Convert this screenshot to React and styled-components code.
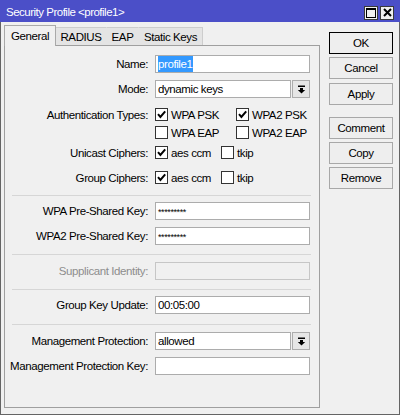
import styled, { createGlobalStyle } from "styled-components";

const GlobalStyle = createGlobalStyle`
  html, body {
    margin: 0;
    padding: 0;
    background: #f0f0f0;
  }
  body {
    font-family: "Liberation Sans", Arial, sans-serif;
    font-size: 11.5px;
    letter-spacing: -0.4px;
    color: #000;
  }
  * {
    box-sizing: border-box;
  }
`;

const tabs = [
  { label: "General", width: 52, active: true },
  { label: "RADIUS", width: 51 },
  { label: "EAP", width: 33 },
  { label: "Static Keys", width: 65 },
];

const buttons = [
  { label: "OK", mt: 0, primary: true },
  { label: "Cancel", mt: 3 },
  { label: "Apply", mt: 4 },
  { label: "Comment", mt: 12 },
  { label: "Copy", mt: 3 },
  { label: "Remove", mt: 3 },
];

const CheckMark = () => (
  <svg width="9" height="9" viewBox="0 0 9 9">
    <path d="M1 4.2 L3.4 6.9 L8.2 1.3" fill="none" stroke="#000" strokeWidth="2" />
  </svg>
);

const DropArrow = () => (
  <svg width="9" height="9" viewBox="0 0 9 9">
    <rect x="1" y="0.5" width="7" height="1.5" fill="#000" />
    <rect x="3" y="3" width="3" height="2" fill="#000" />
    <path d="M0.8 5 L8.2 5 L4.5 8.6 Z" fill="#000" />
  </svg>
);

const Check = ({ label, checked, width }) => (
  <CheckItem $w={width}>
    <CheckBox>{checked && <CheckMark />}</CheckBox>
    <span>{label}</span>
  </CheckItem>
);

const SecurityProfile = () => {
  return (
    <Window>
      <TitleBar>
        <Title>Security Profile &lt;profile1&gt;</Title>
        <TitleButtons>
          <TitleButton>
            <svg width="10" height="10" viewBox="0 0 10 10">
              <rect x="0.5" y="0.5" width="9" height="9" fill="none" stroke="#000" />
              <rect x="0" y="0" width="10" height="2" fill="#000" />
            </svg>
          </TitleButton>
          <TitleButton>
            <svg width="9" height="9" viewBox="0 0 9 9">
              <path d="M1 1 L8 8 M8 1 L1 8" stroke="#000" strokeWidth="2" />
            </svg>
          </TitleButton>
        </TitleButtons>
      </TitleBar>

      <Body>
        <LeftColumn>
          <TabStrip>
            {tabs.map((t) => (
              <Tab key={t.label} $active={t.active} $w={t.width}>
                {t.label}
              </Tab>
            ))}
          </TabStrip>

          <Panel>
            <Row $mt={9}>
              <Label>Name:</Label>
              <TextBox>
                <Selected>profile1</Selected>
              </TextBox>
            </Row>
            <Row $mt={7}>
              <Label>Mode:</Label>
              <Combo>
                <TextBox>dynamic keys</TextBox>
                <DropButton>
                  <DropArrow />
                </DropButton>
              </Combo>
            </Row>

            <Row $mt={10} $h={13}>
              <Label>Authentication Types:</Label>
              <Checks>
                <Check label="WPA PSK" checked width={81} />
                <Check label="WPA2 PSK" checked width={81} />
              </Checks>
            </Row>
            <Row $mt={5} $h={13}>
              <Label />
              <Checks>
                <Check label="WPA EAP" width={81} />
                <Check label="WPA2 EAP" width={81} />
              </Checks>
            </Row>
            <Row $mt={7} $h={13}>
              <Label>Unicast Ciphers:</Label>
              <Checks>
                <Check label="aes ccm" checked width={66} />
                <Check label="tkip" width={66} />
              </Checks>
            </Row>
            <Row $mt={12} $h={13}>
              <Label>Group Ciphers:</Label>
              <Checks>
                <Check label="aes ccm" checked width={66} />
                <Check label="tkip" width={66} />
              </Checks>
            </Row>

            <Separator $mt={11} />

            <Row $mt={6}>
              <Label>WPA Pre-Shared Key:</Label>
              <TextBox>
                <Stars>*********</Stars>
              </TextBox>
            </Row>
            <Row $mt={7}>
              <Label>WPA2 Pre-Shared Key:</Label>
              <TextBox>
                <Stars>*********</Stars>
              </TextBox>
            </Row>

            <Separator $mt={9} />

            <Row $mt={7}>
              <Label $disabled>Supplicant Identity:</Label>
              <TextBox $disabled />
            </Row>

            <Separator $mt={9} />

            <Row $mt={6}>
              <Label>Group Key Update:</Label>
              <TextBox>00:05:00</TextBox>
            </Row>

            <Separator $mt={10} />

            <Row $mt={7}>
              <Label>Management Protection:</Label>
              <Combo>
                <TextBox>allowed</TextBox>
                <DropButton>
                  <DropArrow />
                </DropButton>
              </Combo>
            </Row>
            <Row $mt={7}>
              <Label>Management Protection Key:</Label>
              <TextBox />
            </Row>
          </Panel>
        </LeftColumn>

        <ButtonColumn>
          {buttons.map((b) => (
            <Button key={b.label} $mt={b.mt} $primary={b.primary}>
              {b.label}
            </Button>
          ))}
        </ButtonColumn>
      </Body>
    </Window>
  );
};

// Styled Components

const Window = styled.div`
  width: 400px;
  height: 415px;
  display: flex;
  flex-direction: column;
  background: #f0f0f0;
  border: 1px solid #646464;
  border-top: none;
`;

const TitleBar = styled.div`
  height: 22px;
  margin: 0 -1px;
  padding: 0 6px 0 6px;
  display: flex;
  align-items: center;
  justify-content: space-between;
  background: #4b4fc8;
  color: #fff;
`;

const Title = styled.div`
  font-size: 11.5px;
  letter-spacing: -0.5px;
  padding-top: 1px;
`;

const TitleButtons = styled.div`
  display: flex;
  gap: 2px;
  margin-top: 3px;
`;

const TitleButton = styled.div`
  width: 14px;
  height: 14px;
  display: flex;
  align-items: center;
  justify-content: center;
  background: #f0f0f0;
  border: 1px solid #3a3a3a;
`;

const Body = styled.div`
  flex: 1;
  display: flex;
  gap: 9px;
  padding: 3px 5px 6px 3px;
`;

const LeftColumn = styled.div`
  width: 316px;
  display: flex;
  flex-direction: column;
`;

const TabStrip = styled.div`
  height: 20px;
  display: flex;
  align-items: flex-end;
  position: relative;
  z-index: 1;
`;

const Tab = styled.div`
  width: ${({ $w }) => $w}px;
  height: ${({ $active }) => ($active ? 21 : 18)}px;
  margin-bottom: ${({ $active }) => ($active ? -1 : 0)}px;
  display: flex;
  align-items: center;
  justify-content: center;
  padding-bottom: ${({ $active }) => ($active ? 1 : 0)}px;
  background: ${({ $active }) => ($active ? "#f0f0f0" : "#e4e4e4")};
  border: 1px solid ${({ $active }) => ($active ? "#a9a9a9" : "#cdcdcd")};
  border-bottom: none;
  border-left-color: ${({ $active }) => ($active ? "#a9a9a9" : "transparent")};
  margin-left: ${({ $active }) => ($active ? 0 : -1)}px;
  &:nth-child(2) {
    margin-left: 0;
    border-left: none;
  }
`;

const Panel = styled.div`
  flex: 1;
  display: flex;
  flex-direction: column;
  border: 1px solid #9f9f9f;
  background: #f0f0f0;
`;

const Row = styled.div`
  height: ${({ $h }) => $h || 18}px;
  margin-top: ${({ $mt }) => $mt}px;
  display: flex;
  align-items: center;
  gap: 7px;
`;

const Label = styled.div`
  flex: 0 0 143px;
  text-align: right;
  white-space: nowrap;
  color: ${({ $disabled }) => ($disabled ? "#8d8d8d" : "#000")};
`;

const TextBox = styled.div`
  width: 155px;
  height: 18px;
  padding: 0 2px;
  display: flex;
  align-items: center;
  white-space: nowrap;
  overflow: hidden;
  background: ${({ $disabled }) => ($disabled ? "#f0f0f0" : "#fff")};
  border: 1px solid ${({ $disabled }) => ($disabled ? "#c6c6c6" : "#acacac")};
`;

const Selected = styled.span`
  background: #3399ff;
  color: #fff;
  padding: 1px 0;
  line-height: 14px;
`;

const Stars = styled.span`
  font-size: 9px;
  letter-spacing: -0.4px;
  line-height: 10px;
  padding-top: 1px;
`;

const Combo = styled.div`
  width: 155px;
  display: flex;
  gap: 1px;

  & > ${TextBox} {
    flex: 1;
    width: auto;
  }
`;

const DropButton = styled.div`
  width: 18px;
  height: 18px;
  display: flex;
  align-items: center;
  justify-content: center;
  background: #e6e6e6;
  border: 1px solid #acacac;
`;

const Checks = styled.div`
  display: flex;
`;

const CheckItem = styled.div`
  width: ${({ $w }) => $w}px;
  display: flex;
  align-items: center;
  gap: 3px;
  white-space: nowrap;
`;

const CheckBox = styled.div`
  width: 13px;
  height: 13px;
  flex: none;
  display: flex;
  align-items: center;
  justify-content: center;
  background: #fff;
  border: 1px solid #333;
`;

const Separator = styled.div`
  height: 1px;
  margin: ${({ $mt }) => $mt}px 8px 0 7px;
  background: #d6d6d6;
`;

const ButtonColumn = styled.div`
  display: flex;
  flex-direction: column;
  padding-top: 7px;
`;

const Button = styled.div`
  width: 64px;
  height: 22px;
  margin-top: ${({ $mt }) => $mt}px;
  display: flex;
  align-items: center;
  justify-content: center;
  background: #eeeeee;
  border: 1px solid ${({ $primary }) => ($primary ? "#000" : "#a8a8a8")};
`;

export default function App() {
  return (
    <>
      <GlobalStyle />
      <SecurityProfile />
    </>
  );
}
